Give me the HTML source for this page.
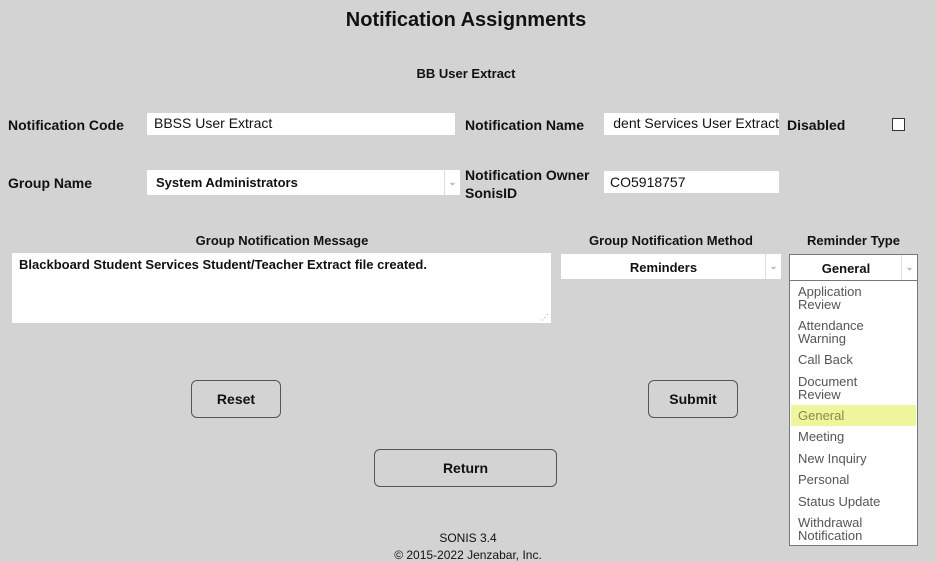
<!DOCTYPE html>
<html><head><style>
body{margin:0;width:936px;height:555px;overflow:hidden;background:#d3d3d3;font-family:"Liberation Sans",sans-serif;color:#111;position:relative}
.a{position:absolute}
.b{font-weight:bold;font-size:14px}
.in{position:absolute;background:#fff;font-size:14px;font-weight:bold;box-sizing:border-box}
.btn{position:absolute;border:1px solid #555;border-radius:6px;box-sizing:border-box;text-align:center;font-weight:bold;font-size:14px}
.arr{position:absolute;top:0;bottom:0;border-left:1px solid #ddd;width:15px;color:#aaa;font-size:9px;text-align:center}
.li{position:absolute;left:8px;font-size:13px;color:#555;line-height:13px}
</style></head><body>
<div class="a" style="left:0;width:932px;top:9px;text-align:center;font-size:20px;font-weight:bold">Notification Assignments</div>
<div class="a" style="left:0;width:932px;top:66px;text-align:center;font-size:13px;font-weight:bold">BB User Extract</div>

<div class="a b" style="left:8px;top:117px">Notification Code</div>
<div class="in" style="left:147px;top:113px;width:308px;height:22px;padding:2px 7px;font-weight:normal">BBSS User Extract</div>
<div class="a b" style="left:465px;top:117px">Notification Name</div>
<div class="in" style="left:604px;top:113px;width:175px;height:22px;padding:2px 0 0 0;font-weight:normal;overflow:hidden;white-space:nowrap;direction:rtl">dent Services User Extract</div>
<div class="a b" style="left:787px;top:117px">Disabled</div>
<div class="a" style="left:892px;top:118px;width:11px;height:11px;border:1px solid #333;background:#fff"></div>

<div class="a b" style="left:8px;top:175px">Group Name</div>
<div class="in" style="left:147px;top:170px;width:313px;height:25px;padding:5px 9px;font-size:13px">System Administrators<div class="arr" style="right:0;line-height:25px">&#8964;</div></div>
<div class="a b" style="left:465px;top:166px;line-height:18px">Notification Owner<br>SonisID</div>
<div class="in" style="left:604px;top:171px;width:175px;height:22px;padding:3px 6px;font-weight:normal">CO5918757</div>

<div class="a b" style="left:12px;width:540px;top:233px;text-align:center;font-size:13px">Group Notification Message</div>
<div class="in" style="left:12px;top:253px;width:539px;height:70px;padding:4px 7px;font-size:13px">Blackboard Student Services Student/Teacher Extract file created.<div class="a" style="right:2px;bottom:1px;font-size:8px;color:#999;font-weight:normal">⋰</div></div>
<div class="a b" style="left:561px;width:220px;top:233px;text-align:center;font-size:13px">Group Notification Method</div>
<div class="in" style="left:561px;top:254px;width:220px;height:25px;padding-top:6px;text-align:center;font-size:13px;padding-right:15px">Reminders<div class="arr" style="right:0;line-height:25px">&#8964;</div></div>
<div class="a b" style="left:789px;width:129px;top:233px;text-align:center;font-size:13px">Reminder Type</div>
<div class="in" style="left:789px;top:254px;width:129px;height:27px;padding-top:6px;text-align:center;font-size:13px;padding-right:15px;border:1px solid #777">General<div class="arr" style="right:0;line-height:25px">&#8964;</div></div>
<div class="a" style="left:789px;top:280px;width:129px;height:266px;background:#fff;border:1px solid #777;box-sizing:border-box">
<div class="a" style="left:1px;right:1px;top:124px;height:21px;background:#eef59b"></div>
<div class="li" style="top:4px">Application<br>Review</div>
<div class="li" style="top:38px">Attendance<br>Warning</div>
<div class="li" style="top:72px">Call Back</div>
<div class="li" style="top:94px">Document<br>Review</div>
<div class="li" style="top:128px;color:#8a8a4a">General</div>
<div class="li" style="top:149px">Meeting</div>
<div class="li" style="top:171px">New Inquiry</div>
<div class="li" style="top:192px">Personal</div>
<div class="li" style="top:214px">Status Update</div>
<div class="li" style="top:235px">Withdrawal<br>Notification</div>
</div>

<div class="btn" style="left:191px;top:380px;width:90px;height:38px;line-height:36px">Reset</div>
<div class="btn" style="left:648px;top:380px;width:90px;height:38px;line-height:36px">Submit</div>
<div class="btn" style="left:374px;top:449px;width:183px;height:38px;line-height:36px">Return</div>
<div class="a" style="left:0;width:936px;top:531px;text-align:center;font-size:12px">SONIS 3.4</div>
<div class="a" style="left:0;width:936px;top:548px;text-align:center;font-size:12px">© 2015-2022 Jenzabar, Inc.</div>
</body></html>
